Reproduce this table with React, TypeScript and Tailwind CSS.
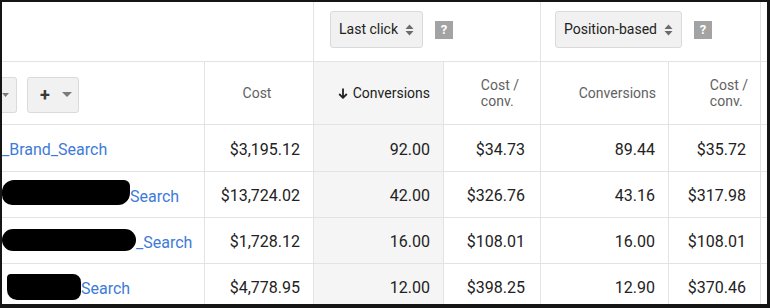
import React from "react";

function SortIcon() {
  return (
    <svg width="9" height="12" viewBox="0 0 9 12" className="shrink-0">
      <path d="M4.5 0.5 L8.5 5 L0.5 5 Z" fill="#6b6b6b" />
      <path d="M4.5 11.5 L8.5 7 L0.5 7 Z" fill="#6b6b6b" />
    </svg>
  );
}

function Caret() {
  return (
    <svg width="10" height="5" viewBox="0 0 10 5" className="shrink-0">
      <path d="M0 0 L10 0 L5 5 Z" fill="#7a7a7a" />
    </svg>
  );
}

function Help() {
  return (
    <div className="w-[18px] h-[18px] bg-[#a3a3a3] text-white text-[13px] font-bold flex items-center justify-center leading-none">
      ?
    </div>
  );
}

function ModelButton({ label }: { label: string }) {
  return (
    <div className="h-[37px] flex items-center gap-[7px] pl-[8px] pr-[8px] bg-[#f1f1f1] border border-[#dadada] rounded-[3px] text-[14px] text-[#222]">
      <span>{label}</span>
      <SortIcon />
    </div>
  );
}

const rows = [
  { cost: "$3,195.12", c1: "92.00", cc1: "$34.73", c2: "89.44", cc2: "$35.72" },
  { cost: "$13,724.02", c1: "42.00", cc1: "$326.76", c2: "43.16", cc2: "$317.98" },
  { cost: "$1,728.12", c1: "16.00", cc1: "$108.01", c2: "16.00", cc2: "$108.01" },
  { cost: "$4,778.95", c1: "12.00", cc1: "$398.25", c2: "12.90", cc2: "$370.46" },
];

function NameCell({ i }: { i: number }) {
  const link = "text-[16px] text-[#3d7bd9]";
  if (i === 0) {
    return <span className={`${link} pt-[2px]`}>_Brand_Search</span>;
  }
  if (i === 1) {
    return (
      <div className="flex items-start h-full">
        <div className="mt-[6px] w-[128px] h-[25px] bg-black rounded-tl-[12px] rounded-bl-[10px] rounded-tr-[6px] rounded-br-[12px]" />
        <span className={`${link} self-center pt-[2px]`}>Search</span>
      </div>
    );
  }
  if (i === 2) {
    return (
      <div className="flex items-start h-full">
        <div className="mt-[9px] w-[134px] h-[22px] bg-black rounded-[11px]" />
        <span className={`${link} self-center pt-[2px]`}>_Search</span>
      </div>
    );
  }
  return (
    <div className="flex items-start h-full">
      <div className="ml-[5px] mt-[8px] w-[74px] h-[26px] bg-black rounded-tl-[4px] rounded-bl-[10px] rounded-tr-[8px] rounded-br-[8px]" />
      <span className={`${link} self-center pt-[2px]`}>Search</span>
    </div>
  );
}

export default function App() {
  const cell = "border-b border-r border-[#e3e3e3]";
  const num = "flex items-center justify-end pt-[3px] text-[16px] text-[#222]";
  return (
    <div className="w-[770px] h-[308px] bg-white border-t-2 border-l-2 border-r-[3px] border-b-[4px] border-[#151515] overflow-hidden font-['Roboto',sans-serif]">
      <div className="grid grid-cols-[203px_109px_130px_97px_128px_92px_1fr]">
        {/* group header row */}
        <div className={`col-span-2 h-[60px] ${cell}`} />
        <div className={`col-span-2 h-[60px] ${cell} flex items-start pt-[9px] pl-[16px]`}>
          <div className="flex items-center gap-[12px]">
            <ModelButton label="Last click" />
            <Help />
          </div>
        </div>
        <div className={`col-span-2 h-[60px] ${cell} flex items-start pt-[9px] pl-[14px]`}>
          <div className="flex items-center gap-[12px]">
            <ModelButton label="Position-based" />
            <Help />
          </div>
        </div>
        <div className="h-[60px] border-b border-[#e3e3e3]" />

        {/* column header row */}
        <div className={`h-[63px] ${cell} flex items-center pt-[3px] gap-[10px]`}>
          <div className="h-[36px] w-[15px] bg-[#f1f1f1] border border-l-0 border-[#dadada] rounded-r-[3px] flex items-center justify-start">
            <svg width="7" height="4" viewBox="0 0 7 4">
              <path d="M0 0 L7 0 L3.5 4 Z" fill="#7a7a7a" />
            </svg>
          </div>
          <div className="h-[36px] w-[52px] bg-[#f1f1f1] border border-[#dadada] rounded-[3px] flex items-center pl-[12px] gap-[12px]">
            <span className="text-[18px] font-bold text-[#3a3a3a] leading-none">+</span>
            <Caret />
          </div>
        </div>
        <div className={`h-[63px] ${cell} flex items-center justify-center pr-[4px] text-[14px] text-[#616161]`}>
          Cost
        </div>
        <div className={`h-[63px] ${cell} bg-[#f5f5f5] flex items-center justify-end pr-[13px] text-[14px] text-[#212121] gap-[5px]`}>
          <svg width="10" height="11" viewBox="0 0 10 11">
            <path d="M5 0.5 V9.5 M1.2 6 L5 9.8 L8.8 6" stroke="#212121" strokeWidth="1.8" fill="none" />
          </svg>
          <span>Conversions</span>
        </div>
        <div className={`h-[63px] ${cell} flex items-center justify-end pr-[21px] text-[14px] text-[#616161] leading-[16px]`}>
          <div className="text-left">
            Cost /<br />conv.
          </div>
        </div>
        <div className={`h-[63px] ${cell} flex items-center justify-end pr-[12px] text-[14px] text-[#616161]`}>
          Conversions
        </div>
        <div className={`h-[63px] ${cell} flex items-center justify-end pr-[12px] text-[14px] text-[#616161] leading-[16px]`}>
          <div className="text-left">
            Cost /<br />conv.
          </div>
        </div>
        <div className="h-[63px] border-b border-[#e3e3e3]" />

        {/* data rows */}
        {rows.map((r, i) => (
          <React.Fragment key={i}>
            <div className={`${i === 0 ? "h-[47px]" : "h-[46px]"} ${cell} flex items-center pt-[2px] overflow-hidden whitespace-nowrap`}>
              <NameCell i={i} />
            </div>
            <div className={`${i === 0 ? "h-[47px]" : "h-[46px]"} ${cell} ${num} pr-[13px]`}>{r.cost}</div>
            <div className={`${i === 0 ? "h-[47px]" : "h-[46px]"} ${cell} ${num} bg-[#f5f5f5] pr-[13px]`}>{r.c1}</div>
            <div className={`${i === 0 ? "h-[47px]" : "h-[46px]"} ${cell} ${num} pr-[15px]`}>{r.cc1}</div>
            <div className={`${i === 0 ? "h-[47px]" : "h-[46px]"} ${cell} ${num} pr-[13px]`}>{r.c2}</div>
            <div className={`${i === 0 ? "h-[47px]" : "h-[46px]"} ${cell} ${num} pr-[14px]`}>{r.cc2}</div>
            <div className={`${i === 0 ? "h-[47px]" : "h-[46px]"} border-b border-[#e3e3e3]`} />
          </React.Fragment>
        ))}
      </div>
    </div>
  );
}
